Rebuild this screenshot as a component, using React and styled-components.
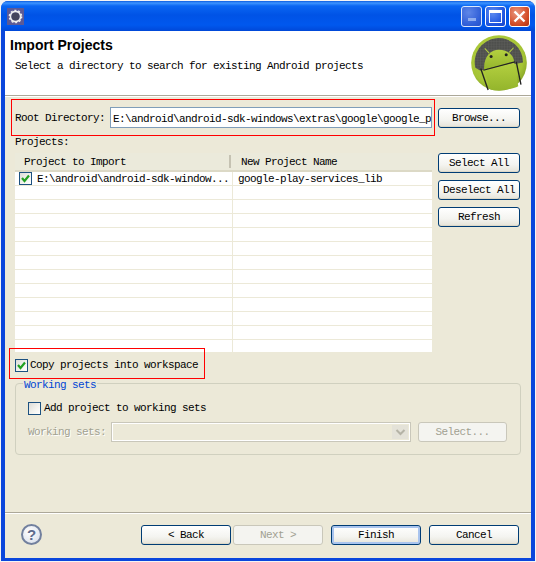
import styled, { createGlobalStyle } from "styled-components";

const GlobalStyle = createGlobalStyle`
  html, body {
    margin: 0;
    background: #f4f4f4;
  }
  * {
    box-sizing: border-box;
  }
`;

const mono = `"Liberation Mono", "DejaVu Sans Mono", monospace`;

const Window = styled.div`
  width: 534px;
  height: 560px;
  margin: 1px 0 0 1px;
  display: flex;
  flex-direction: column;
  background: #0a46dc;
  border-radius: 7px 7px 0 0;
  padding: 0 4px 3px 4px;
  font: 11px/14px ${mono};
  letter-spacing: -0.6px;
  color: #000;
`;

const TitleBar = styled.div`
  height: 30px;
  margin: 0 -4px;
  padding: 0 5px 0 6px;
  display: flex;
  align-items: center;
  border-radius: 7px 7px 0 0;
  background: linear-gradient(
    180deg,
    #0a5ce0 0,
    #3d95ff 2px,
    #0a66f2 5px,
    #0053e6 14px,
    #0058ee 24px,
    #0048d8 30px
  );
`;

const TitleButtons = styled.div`
  margin-left: auto;
  display: flex;
  gap: 3px;
`;

const TitleButton = styled.div`
  width: 21px;
  height: 21px;
  border: 1px solid #fff;
  border-radius: 3px;
  display: flex;
  align-items: center;
  justify-content: center;
  background: ${(p) =>
    p.$close
      ? "radial-gradient(circle at 35% 30%, #e9977f, #d5502c 60%, #b5300e)"
      : p.$dim
        ? "radial-gradient(circle at 35% 30%, #6f8fe8, #3a62d6 65%, #2c50c4)"
        : "radial-gradient(circle at 35% 30%, #5f8cf0, #1f55e0 65%, #1442c8)"};
  opacity: ${(p) => (p.$dim ? 0.85 : 1)};
`;

const MinGlyph = styled.div`
  width: 8px;
  height: 3px;
  margin-top: 7px;
  background: #a9bdf0;
`;

const MaxGlyph = styled.div`
  width: 13px;
  height: 13px;
  border: 1px solid #fff;
  border-top-width: 3px;
`;

const Header = styled.div`
  height: 64px;
  background: #fff;
  padding: 6px 4px 0 5px;
  display: flex;
  justify-content: space-between;
`;

const HeaderText = styled.div`
  display: flex;
  flex-direction: column;
`;

const Title = styled.div`
  font: bold 14px/16px "Liberation Sans", Arial, sans-serif;
  letter-spacing: 0;
`;

const Subtitle = styled.div`
  margin: 6px 0 0 5px;
  line-height: 14px;
`;

const Logo = styled.svg`
  width: 56px;
  height: 56px;
  margin: -2px 0 0;
  flex: none;
`;

const Divider = styled.div`
  height: 2px;
  flex: none;
  background: #aca899;
  border-bottom: 1px solid #fff;
`;

const Body = styled.div`
  flex: 1;
  background: #ece9d8;
  display: flex;
  flex-direction: column;
  min-height: 0;
`;

const Main = styled.div`
  flex: 1;
  padding: 2px 10px 0 6px;
  display: flex;
  flex-direction: column;
`;

const RootRow = styled.div`
  display: flex;
  align-items: flex-start;
  gap: 3px;
`;

const RedBox = styled.div`
  border: 1px solid #f00;
  display: flex;
  align-items: center;
  position: relative;
  z-index: 1;
`;

const RootBox = styled(RedBox)`
  width: 424px;
  height: 37px;
  padding: 0 2px 0 3px;
  justify-content: space-between;
`;

const RootLabel = styled.span`
  margin-top: 1px;
`;

const PathInput = styled.div`
  width: 322px;
  height: 21px;
  background: #fff;
  border: 1px solid #7f9db9;
  padding: 4px 0 0 2px;
  overflow: hidden;
  white-space: nowrap;
`;

const Button = styled.div`
  width: ${(p) => p.$width || 82}px;
  height: 20px;
  flex: none;
  display: flex;
  align-items: center;
  justify-content: center;
  white-space: nowrap;
  border-radius: 3px;
  border: 1px solid ${(p) => (p.$disabled ? "#c9c7ba" : "#003c74")};
  color: ${(p) => (p.$disabled ? "#a1a192" : "#000")};
  background: ${(p) =>
    p.$disabled
      ? "#f4f4f0"
      : "linear-gradient(180deg, #fff 0%, #f4f4f0 60%, #e6e3d8 100%)"};
  box-shadow: ${(p) =>
    p.$default
      ? "inset 0 0 0 2px #a9c4ee"
      : p.$disabled
        ? "none"
        : "inset 0 -1px 0 #dcd8c8"};
`;

const BrowseButton = styled(Button)`
  margin-top: 9px;
`;

const ProjectsLabel = styled.div`
  margin: -1px 0 0 4px;
  height: 18px;
`;

const TableRow = styled.div`
  display: flex;
  gap: 6px;
  margin-left: 4px;
`;

const Table = styled.div`
  width: 417px;
  height: 199px;
  flex: none;
  background: #fff;
  display: flex;
  flex-direction: column;
  overflow: hidden;
`;

const TableHead = styled.div`
  height: 19px;
  flex: none;
  display: grid;
  grid-template-columns: 216px 1fr;
  align-items: center;
  background: #ebeadb;
  border-bottom: 2px solid #dcd9c6;
`;

const HeadCell = styled.div`
  padding-left: ${(p) => p.$pad}px;
  height: 13px;
  line-height: 15px;
  border-right: ${(p) => (p.$line ? "2px solid #c5c2b2" : "none")};
`;

const Row = styled.div`
  height: 14px;
  flex: none;
  display: grid;
  grid-template-columns: 218px 1fr;
  border-bottom: 1px solid #ece9d8;
`;

const Cell = styled.div`
  display: flex;
  align-items: center;
  gap: 5px;
  padding-left: ${(p) => p.$pad}px;
  border-right: ${(p) => (p.$line ? "1px solid #ece9d8" : "none")};
  white-space: nowrap;
  overflow: hidden;
`;

const SideButtons = styled.div`
  display: flex;
  flex-direction: column;
  gap: 7px;
`;

const CheckBox = styled.div`
  width: ${(p) => p.$size || 13}px;
  height: ${(p) => p.$size || 13}px;
  flex: none;
  border: 1px solid #1c5180;
  background: linear-gradient(135deg, #dcdcd7 0%, #f4f4f0 60%, #fff 100%);
  display: flex;
  align-items: center;
  justify-content: center;
`;

const CopyBox = styled(RedBox)`
  width: 196px;
  height: 31px;
  margin: -4px 0 0 -2px;
  padding: 3px 0 0 5px;
  gap: 2px;
`;

const Group = styled.fieldset`
  margin: -2px 0 0 4px;
  padding: 0 0 0 12px;
  width: 506px;
  height: 78px;
  border: 1px solid #d0d0bf;
  border-radius: 4px;
`;

const Legend = styled.legend`
  margin-left: -5px;
  padding: 0 1px;
  color: #0046d5;
  line-height: 12px;
  position: relative;
  top: 2px;
`;

const AddRow = styled.div`
  display: flex;
  align-items: center;
  gap: 3px;
  margin-top: 12px;
`;

const SetsRow = styled.div`
  display: flex;
  align-items: center;
  margin-top: 7px;
`;

const MutedLabel = styled.div`
  width: 83px;
  color: #a1a192;
  text-shadow: 1px 1px 0 #fff;
`;

const Combo = styled.div`
  width: 300px;
  height: 20px;
  border: 1px solid #c9c7ba;
  box-shadow: inset 0 0 0 1px #fff;
  display: flex;
  justify-content: flex-end;
  padding: 2px;
`;

const ComboArrow = styled.div`
  width: 16px;
  background: #e4e2d8;
  display: flex;
  align-items: center;
  justify-content: center;
`;

const SelectButton = styled(Button)`
  margin-left: 7px;
`;

const Footer = styled.div`
  height: 46px;
  flex: none;
  border-top: 1px solid #aca899;
  box-shadow: inset 0 1px 0 #fff;
  padding: 12px 12px 0 16px;
  display: flex;
  align-items: flex-start;
`;

const HelpIcon = styled.div`
  width: 21px;
  height: 21px;
  border-radius: 50%;
  border: 2px solid #72809e;
  background: radial-gradient(circle at 40% 35%, #fff, #d5dbe8);
  color: #5d6b8c;
  font: bold 15px/17px "Liberation Sans", Arial, sans-serif;
  letter-spacing: 0;
  text-align: center;
  margin-top: -1px;
`;

const WizardButtons = styled.div`
  margin-left: auto;
  display: flex;
`;

const NavButton = styled(Button)`
  margin-left: ${(p) => p.$gap || 0}px;
`;

const Check = () => (
  <svg width="11" height="11" viewBox="0 0 11 11">
    <path d="M2 5 L4.5 8 L9 2.5" fill="none" stroke="#21a121" strokeWidth="2.2" />
  </svg>
);

const AppIcon = () => (
  <svg width="17" height="17" viewBox="0 0 17 17">
    <rect width="17" height="17" fill="#5c5a96" />
    <circle cx="8.5" cy="8.5" r="5" fill="none" stroke="#eeeeee" strokeWidth="1.8" />
    <circle
      cx="8.5"
      cy="8.5"
      r="6.2"
      fill="none"
      stroke="#eeeeee"
      strokeWidth="1.3"
      strokeDasharray="2 1.9"
    />
    <circle cx="8.5" cy="8.5" r="4" fill="#44445c" />
  </svg>
);

const CloseGlyph = () => (
  <svg width="13" height="13" viewBox="0 0 13 13">
    <path d="M1.5 1.5 L11.5 11.5 M11.5 1.5 L1.5 11.5" stroke="#fff" strokeWidth="2.4" />
  </svg>
);

const AndroidLogo = () => (
  <Logo viewBox="45 22 167 167">
    <defs>
      <radialGradient id="rim" cx="45%" cy="40%" r="65%">
        <stop offset="0%" stopColor="#bcd640" />
        <stop offset="75%" stopColor="#a5c436" />
        <stop offset="100%" stopColor="#7f9c22" />
      </radialGradient>
      <linearGradient id="bot" x1="0" y1="0" x2="0" y2="1">
        <stop offset="0%" stopColor="#b4d040" />
        <stop offset="100%" stopColor="#94b52c" />
      </linearGradient>
      <pattern id="mesh" width="8" height="8" patternUnits="userSpaceOnUse">
        <rect width="8" height="8" fill="#4e4f4c" />
        <path d="M0 0H8M0 0V8" stroke="#6a6b66" strokeWidth="1.5" />
      </pattern>
    </defs>
    <circle cx="128.5" cy="105.5" r="83" fill="url(#rim)" />
    <path d="M58 120 A72 72 0 1 1 200 104 L180 108 L72 128 Z" fill="url(#mesh)" />
    <path d="M84 125 C82 85 105 66 128 66 C155 66 172 82 174 103 Z" fill="url(#bot)" />
    <path d="M84 126 L174 104 L186 175 C165 186 115 190 102 184 Z" fill="url(#bot)" />
    <path d="M82 127 L176 102" stroke="#222" strokeWidth="3.5" fill="none" />
    <path d="M74 122 L96 186" stroke="#222" strokeWidth="4" fill="none" />
    <path d="M180 102 L194 170" stroke="#222" strokeWidth="4" fill="none" />
    <path d="M86 62 L99 76 M172 60 L159 74" stroke="#b4d040" strokeWidth="3" />
    <circle cx="105" cy="86" r="4.5" fill="#222" />
    <circle cx="150" cy="81" r="4.5" fill="#222" />
  </Logo>
);

const rows = Array.from({ length: 12 }, (_, i) => i);

export default function App() {
  return (
    <>
      <GlobalStyle />
      <Window>
        <TitleBar>
          <AppIcon />
          <TitleButtons>
            <TitleButton $dim>
              <MinGlyph />
            </TitleButton>
            <TitleButton>
              <MaxGlyph />
            </TitleButton>
            <TitleButton $close>
              <CloseGlyph />
            </TitleButton>
          </TitleButtons>
        </TitleBar>
        <Header>
          <HeaderText>
            <Title>Import Projects</Title>
            <Subtitle>Select a directory to search for existing Android projects</Subtitle>
          </HeaderText>
          <AndroidLogo />
        </Header>
        <Divider />
        <Body>
          <Main>
            <RootRow>
              <RootBox>
                <RootLabel>Root Directory:</RootLabel>
                <PathInput>E:\android\android-sdk-windows\extras\google\google_p</PathInput>
              </RootBox>
              <BrowseButton>Browse...</BrowseButton>
            </RootRow>
            <ProjectsLabel>Projects:</ProjectsLabel>
            <TableRow>
              <Table>
                <TableHead>
                  <HeadCell $pad={9} $line>
                    Project to Import
                  </HeadCell>
                  <HeadCell $pad={10}>New Project Name</HeadCell>
                </TableHead>
                <Row>
                  <Cell $pad={4} $line>
                    <CheckBox>
                      <Check />
                    </CheckBox>
                    E:\android\android-sdk-window...
                  </Cell>
                  <Cell $pad={5}>google-play-services_lib</Cell>
                </Row>
                {rows.map((i) => (
                  <Row key={i}>
                    <Cell $line />
                    <Cell />
                  </Row>
                ))}
              </Table>
              <SideButtons>
                <Button>Select All</Button>
                <Button>Deselect All</Button>
                <Button>Refresh</Button>
              </SideButtons>
            </TableRow>
            <CopyBox>
              <CheckBox>
                <Check />
              </CheckBox>
              Copy projects into workspace
            </CopyBox>
            <Group>
              <Legend>Working sets</Legend>
              <AddRow>
                <CheckBox />
                Add project to working sets
              </AddRow>
              <SetsRow>
                <MutedLabel>Working sets:</MutedLabel>
                <Combo>
                  <ComboArrow>
                    <svg width="11" height="7" viewBox="0 0 11 7">
                      <path d="M1.5 1 L5.5 5 L9.5 1" fill="none" stroke="#b5b3a6" strokeWidth="2" />
                    </svg>
                  </ComboArrow>
                </Combo>
                <SelectButton $width={89} $disabled>
                  Select...
                </SelectButton>
              </SetsRow>
            </Group>
          </Main>
          <Footer>
            <HelpIcon>?</HelpIcon>
            <WizardButtons>
              <NavButton $width={90}>&lt; Back</NavButton>
              <NavButton $width={90} $gap={2} $disabled>
                Next &gt;
              </NavButton>
              <NavButton $width={90} $gap={8} $default>
                Finish
              </NavButton>
              <NavButton $width={90} $gap={8}>
                Cancel
              </NavButton>
            </WizardButtons>
          </Footer>
        </Body>
      </Window>
    </>
  );
}
